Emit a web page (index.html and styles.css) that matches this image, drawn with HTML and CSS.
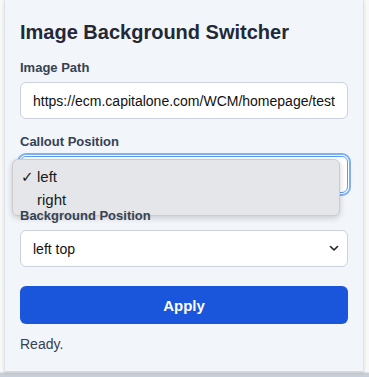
FILE: index.html
```html
<!DOCTYPE html>
<html>
<head>
<meta charset="utf-8">
<link rel="stylesheet" href="styles.css">
</head>
<body>
<div class="backdrop">
  <div class="panel">
    <h1 class="title">Image Background Switcher</h1>
    <div class="field">
      <label class="label">Image Path</label>
      <input class="control input" type="text" value="https://ecm.capitalone.com/WCM/homepage/test">
    </div>
    <div class="field">
      <label class="label">Callout Position</label>
      <div class="select-wrap">
        <select class="control select focused"><option>left</option><option>right</option></select>
        <svg class="chev" width="10" height="7" viewBox="0 0 10 7"><path d="M1.5 1.5 L5 5 L8.5 1.5" fill="none" stroke="#222" stroke-width="1.6" stroke-linecap="round" stroke-linejoin="round"/></svg>
      </div>
      <div class="menu">
        <div class="menu-item"><span class="check">✓</span>left</div>
        <div class="menu-item"><span class="check"></span>right</div>
      </div>
    </div>
    <div class="field">
      <label class="label">Background Position</label>
      <div class="select-wrap">
        <select class="control select"><option>left top</option></select>
        <svg class="chev" width="10" height="7" viewBox="0 0 10 7"><path d="M1.5 1.5 L5 5 L8.5 1.5" fill="none" stroke="#222" stroke-width="1.6" stroke-linecap="round" stroke-linejoin="round"/></svg>
      </div>
    </div>
    <button class="apply">Apply</button>
    <div class="status">Ready.</div>
  </div>
</div>
</body>
</html>
```
FILE: styles.css
```css
html, body {
  margin: 0;
  padding: 0;
}
body {
  background: #f8f8f8;
  font-family: "Liberation Sans", Arial, sans-serif;
  width: 369px;
  height: 377px;
  overflow: hidden;
}
.backdrop {
  height: 377px;
  background: linear-gradient(to bottom, #f8f8f8 0, #f8f8f8 372px, #c9cfd8 373px);
  padding-left: 4px;
  box-sizing: border-box;
}
.panel {
  width: 360px;
  box-sizing: border-box;
  background: #f2f5fa;
  border-left: 1px solid #dfe2e6;
  border-right: 1px solid #dfe2e6;
  border-bottom: 1px solid #d6d9dd;
  padding: 20px 15px 18px 15px;
  height: 372px;
  box-shadow: 0 1px 3px rgba(0,0,0,0.12);
}
.title {
  margin: 0 0 16px;
  font-size: 20px;
  line-height: 24px;
  font-weight: 700;
  color: #1f2937;
}
.field {
  position: relative;
  margin-bottom: 15px;
}
.label {
  display: block;
  font-size: 13px;
  line-height: 16px;
  font-weight: 700;
  color: #374151;
  margin-bottom: 6px;
}
.control {
  display: block;
  width: 100%;
  height: 37px;
  box-sizing: border-box;
  border: 1px solid #cbd2dc;
  border-radius: 6px;
  background: #fff;
  font-family: "Liberation Sans", Arial, sans-serif;
  font-size: 14px;
  color: #111;
  padding: 0 12px;
  margin: 0;
  outline: none;
}
.select-wrap {
  position: relative;
}
.select {
  appearance: none;
  -webkit-appearance: none;
}
.focused {
  border-color: #5b9cf0;
  box-shadow: 0 0 0 1px #fff, 0 0 0 3px #7fb0f2;
}
.chev {
  position: absolute;
  right: 9px;
  top: 15px;
}
.menu {
  position: absolute;
  left: -8px;
  top: 25px;
  width: 328px;
  box-sizing: border-box;
  background: #e4e6e9;
  border: 1px solid #c9cbcf;
  border-radius: 6px;
  box-shadow: 0 2px 6px rgba(0,0,0,0.18);
  padding: 5px 0 4px;
}
.menu-item {
  display: flex;
  align-items: center;
  height: 23px;
  font-size: 15px;
  color: #1a1a1a;
  padding-left: 8px;
}
.check {
  width: 16px;
  font-family: "DejaVu Sans", sans-serif;
  font-size: 15px;
  font-weight: 700;
  color: #222;
}
.apply {
  display: block;
  width: 100%;
  height: 38px;
  margin-top: 19px;
  border: none;
  border-radius: 6px;
  background: #1a56db;
  color: #fff;
  font-family: "Liberation Sans", Arial, sans-serif;
  font-size: 15px;
  font-weight: 700;
}
.status {
  margin-top: 12px;
  font-size: 14px;
  line-height: 17px;
  color: #374151;
}
```
